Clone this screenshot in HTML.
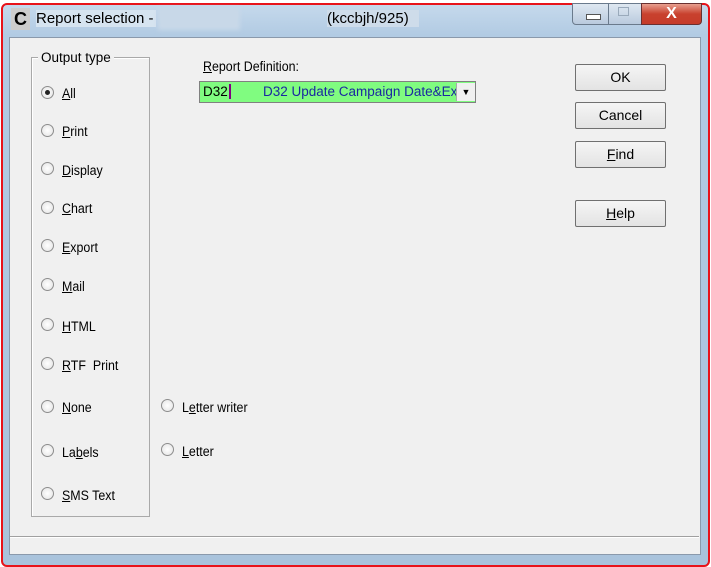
<!DOCTYPE html><html><head><style>
body{margin:0;width:711px;height:567px;background:#fff;position:relative;overflow:hidden;font-family:"Liberation Sans",sans-serif;font-size:13px;color:#000}
.a{position:absolute}
.frame{left:1px;top:3px;width:705px;height:560px;border:2px solid #e8131a;border-radius:6px;background:linear-gradient(#c5d9ec,#b2cbe3 30px,#a9c3dc)}
.client{left:9px;top:37px;width:690px;height:516px;background:#f0f0f0;border:1px solid #8a99ab}
.rb{width:11px;height:11px;border-radius:50%;border:1px solid #8d8d8d;background:radial-gradient(#fff,#e2e2e2)}
.lbl{font-size:13.5px;transform:scaleX(.92);transform-origin:left}
.btn{width:91px;height:27px;border:1px solid #707070;background:linear-gradient(#f5f5f5,#e3e3e3);box-sizing:border-box;text-align:center;line-height:25px;font-size:14px;border-radius:2px}
u{text-decoration:underline}
</style></head><body>
<div class="a frame"></div>
<div class="a" style="left:11px;top:8px;width:19px;height:22px;background:#ccc;font:bold 18px 'Liberation Sans';line-height:22px;text-align:center">C</div>
<div class="a" style="left:36px;top:10px;font-size:15px;width:120px;background:#d6e4f0">Report selection -</div>
<div class="a" style="left:158px;top:8px;width:82px;height:22px;background:#c8d8e8;filter:blur(2px)"></div>
<div class="a" style="left:327px;top:10px;font-size:15px;background:#cedcea;width:92px">(kccbjh/925)</div>
<div class="a" style="left:572px;top:3px;width:35px;height:20px;border:1px solid #6a7a8c;border-radius:0 0 0 4px;background:linear-gradient(#dfe8f1,#b9cade)"></div>
<div class="a" style="left:586px;top:14px;width:13px;height:4px;background:#fff;border:1px solid #555"></div>
<div class="a" style="left:608px;top:3px;width:32px;height:20px;border:1px solid #6a7a8c;background:linear-gradient(#dfe8f1,#b9cade)"></div>
<div class="a" style="left:618px;top:7px;width:9px;height:7px;border:1px solid #9aaabb"></div>
<div class="a" style="left:641px;top:3px;width:59px;height:20px;border:1px solid #6a3030;border-radius:0 0 4px 0;background:linear-gradient(#e8a090,#c8412e 50%,#c63c2a);color:#fff;font:bold 16px 'Liberation Sans';text-align:center;line-height:20px">X</div>
<div class="a client"></div>
<div class="a" style="left:10px;top:536px;width:689px;border-top:1px solid #a0a0a0;border-bottom:1px solid #fff"></div>
<div class="a" style="left:31px;top:57px;width:117px;height:458px;border:1px solid #a9a9a9;box-shadow:inset 1px 1px #fff"></div>
<div class="a" style="left:38px;top:50px;background:#f0f0f0;padding:0 3px;font-size:13.5px">Output type</div>
<div class="a rb" style="left:41px;top:86px"><div class="a" style="left:3px;top:3px;width:5px;height:5px;border-radius:50%;background:#222"></div></div>
<div class="a lbl" style="left:62px;top:86px"><u>A</u>ll</div>
<div class="a rb" style="left:41px;top:124px"></div><div class="a lbl" style="left:62px;top:124px"><u>P</u>rint</div>
<div class="a rb" style="left:41px;top:162px"></div><div class="a lbl" style="left:62px;top:163px"><u>D</u>isplay</div>
<div class="a rb" style="left:41px;top:201px"></div><div class="a lbl" style="left:62px;top:201px"><u>C</u>hart</div>
<div class="a rb" style="left:41px;top:239px"></div><div class="a lbl" style="left:62px;top:240px"><u>E</u>xport</div>
<div class="a rb" style="left:41px;top:278px"></div><div class="a lbl" style="left:62px;top:279px"><u>M</u>ail</div>
<div class="a rb" style="left:41px;top:318px"></div><div class="a lbl" style="left:62px;top:319px"><u>H</u>TML</div>
<div class="a rb" style="left:41px;top:357px"></div><div class="a lbl" style="left:62px;top:358px"><u>R</u>TF&nbsp; Print</div>
<div class="a rb" style="left:41px;top:400px"></div><div class="a lbl" style="left:62px;top:400px"><u>N</u>one</div>
<div class="a rb" style="left:41px;top:444px"></div><div class="a lbl" style="left:62px;top:445px">La<u>b</u>els</div>
<div class="a rb" style="left:41px;top:487px"></div><div class="a lbl" style="left:62px;top:488px"><u>S</u>MS Text</div>
<div class="a rb" style="left:161px;top:399px"></div><div class="a lbl" style="left:182px;top:400px">L<u>e</u>tter writer</div>
<div class="a rb" style="left:161px;top:443px"></div><div class="a lbl" style="left:182px;top:444px"><u>L</u>etter</div>
<div class="a lbl" style="left:203px;top:59px"><u>R</u>eport Definition:</div>
<div class="a" style="left:199px;top:81px;width:277px;height:22px;border:1px solid #808080;box-sizing:border-box;background:#80fc80"></div>
<div class="a" style="left:203px;top:84px;font-size:13.5px">D32<span style="border-left:2px solid #800080;margin-left:1px"></span></div>
<div class="a" style="left:263px;top:84px;font-size:13.5px;color:#1a28a0;width:193px;overflow:hidden;white-space:nowrap">D32 Update Campaign Date&amp;Exec</div>
<div class="a" style="left:456px;top:83px;width:18px;height:18px;background:#f0f0f0;border-left:1px solid #aaa;font-size:9px;text-align:center;line-height:18px">▼</div>
<div class="a btn" style="left:575px;top:64px">OK</div>
<div class="a btn" style="left:575px;top:102px">Cancel</div>
<div class="a btn" style="left:575px;top:141px"><u>F</u>ind</div>
<div class="a btn" style="left:575px;top:200px"><u>H</u>elp</div>
</body></html>
